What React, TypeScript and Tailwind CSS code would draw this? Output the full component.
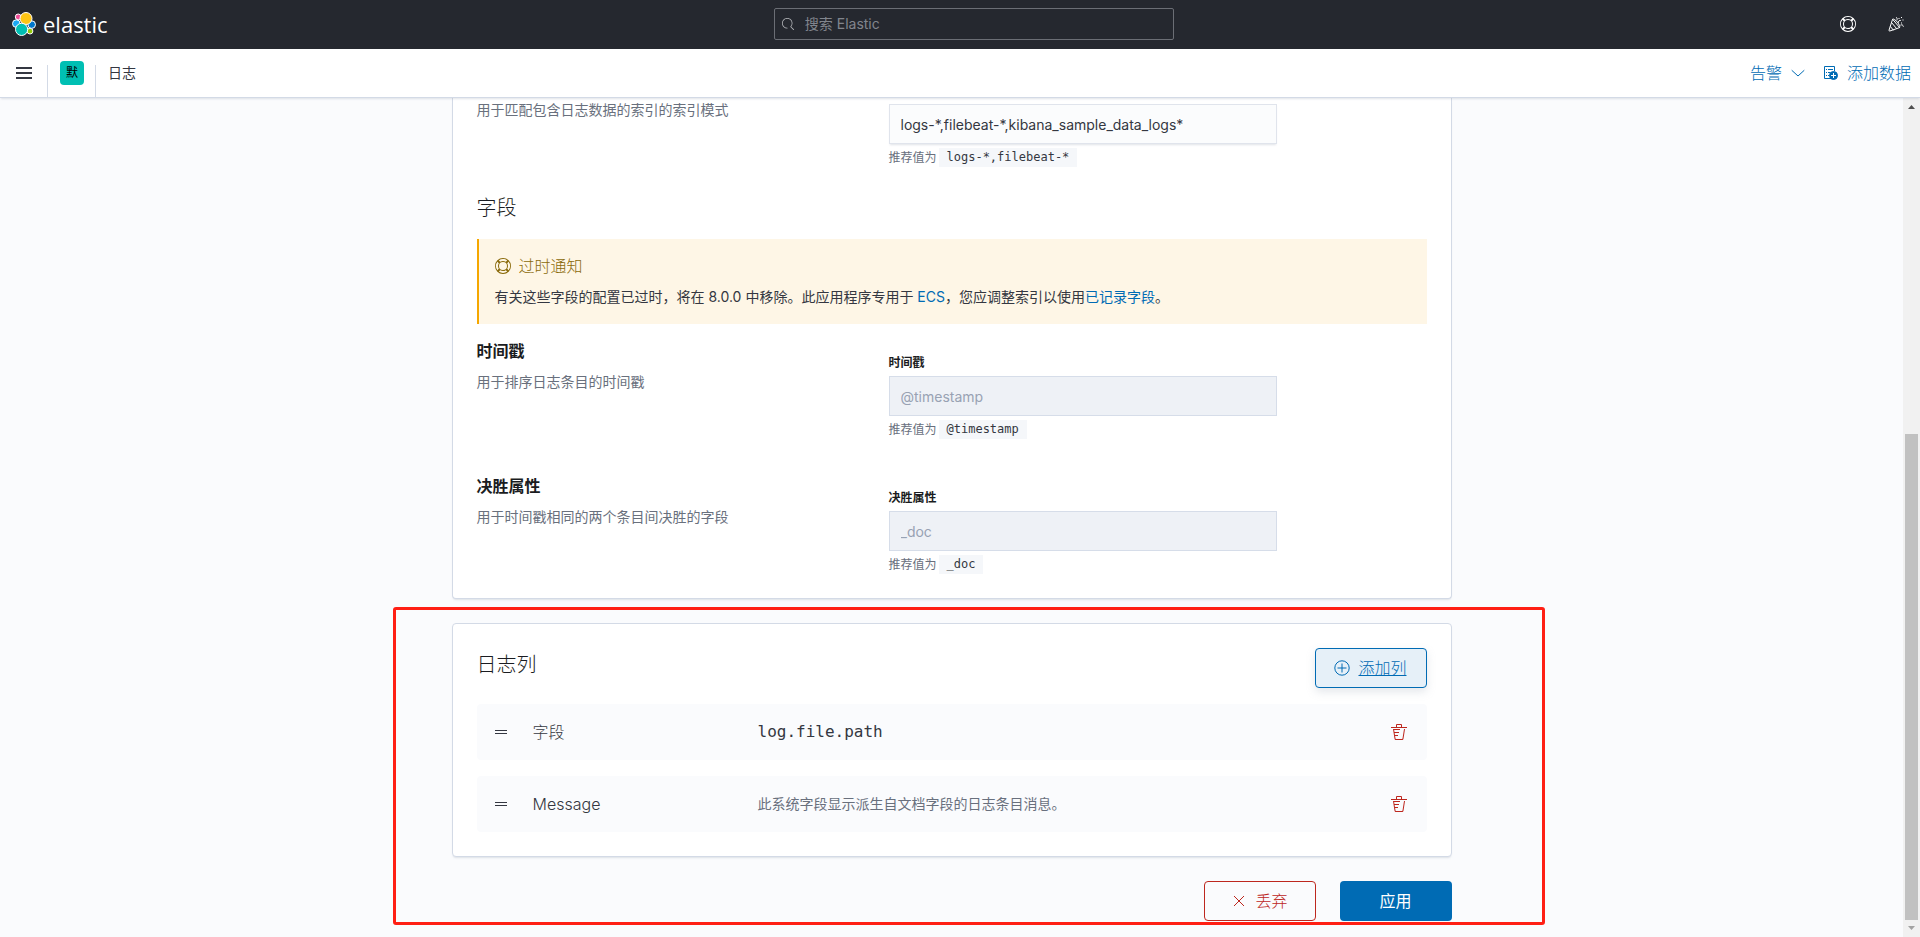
import React from "react";

const MONO = "font-['DejaVu_Sans_Mono','Noto_Sans_CJK_SC',monospace]";

const LogoElastic = () => (
  <svg viewBox="0 0 24 24" className="size-6 shrink-0" stroke="#fff" strokeWidth="1">
    <circle cx="6.2" cy="4.9" r="2.9" fill="#f04e98" />
    <circle cx="18" cy="19.1" r="2.9" fill="#93c90e" />
    <circle cx="4.3" cy="11.6" r="3.8" fill="#1ba9f5" />
    <circle cx="19.7" cy="12.6" r="3.8" fill="#0077cc" />
    <circle cx="14" cy="6.5" r="6" fill="#fec514" />
    <circle cx="9.6" cy="17.4" r="6.1" fill="#00bfb3" />
  </svg>
);

const HelpIcon = () => (
  <svg viewBox="0 0 16 16" className="size-4 shrink-0" fill="currentColor">
    <path d="M13.6 12.186l-1.357-1.358c-.025-.025-.058-.034-.084-.056.53-.794.84-1.746.84-2.773a4.977 4.977 0 00-.84-2.772c.026-.02.059-.03.084-.056L13.6 3.813a6.96 6.96 0 010 8.373zM8 15A6.956 6.956 0 013.814 13.6l1.358-1.358c.025-.025.034-.057.055-.084C6.02 12.688 6.974 13 8 13a4.978 4.978 0 002.773-.84c.02.026.03.058.056.083l1.357 1.358A6.956 6.956 0 018 15zm-5.601-2.813a6.963 6.963 0 010-8.373l1.359 1.358c.024.025.057.035.084.056A4.97 4.97 0 003 8c0 1.027.31 1.98.842 2.773-.027.022-.06.031-.084.056l-1.36 1.358zm5.6-.187A4 4 0 118 4a4 4 0 010 8zM8 1c1.573 0 3.019.525 4.187 1.4l-1.357 1.358c-.025.025-.035.057-.056.084A4.979 4.979 0 008 3a4.979 4.979 0 00-2.773.842c-.021-.027-.03-.059-.055-.084L3.814 2.4A6.957 6.957 0 018 1zm0-1a8.001 8.001 0 10.003 16.002A8.001 8.001 0 008 0z" />
  </svg>
);

const CheerIcon = () => (
  <svg viewBox="0 0 16 16" className="size-4 shrink-0" fill="none" stroke="currentColor">
    <path d="M4.6 3.2 1 14.2c-.1.6.2.9.8.8l9.8-3.4z" strokeLinejoin="round" />
    <path d="M4.6 3.2c1-.6 3 .8 4.8 3s2.8 4.6 2.2 5.4M3.6 6.6l5 6M2.3 10.4l3.2 3.9" />
    <path d="M8.2 1.2c1 .8 1.2 2 .6 3.2M10 7c.2-1.8 1.2-2.6 2.6-2.6M12.4 9.2c1.4-.8 2.8-.2 3 1.5" />
    <path d="M10.5 2.5h1M13 1.5h1M14.5 4h1M13 7h1M11.5 4.5h1" />
  </svg>
);

const SearchIcon = () => (
  <svg viewBox="0 0 16 16" className="size-3 shrink-0" fill="currentColor">
    <path d="M11.271 11.978l3.872 3.873a.502.502 0 00.708 0 .502.502 0 000-.708l-3.565-3.564c2.38-2.747 2.267-6.923-.342-9.532-2.73-2.73-7.17-2.73-9.898 0-2.728 2.729-2.728 7.17 0 9.9a6.955 6.955 0 004.949 2.05.5.5 0 000-1 5.96 5.96 0 01-4.242-1.757 6.01 6.01 0 010-8.486 6.004 6.004 0 018.484 0 6.01 6.01 0 010 8.486.5.5 0 00.034.738z" />
  </svg>
);

const AddDataIcon = () => (
  <svg viewBox="0 0 16 16" className="size-4 shrink-0" fill="none" stroke="currentColor">
    <path d="M8 13.5H1.5v-12h10V6" />
    <path d="M3 4.5h1M5 4.5h5M3 7.5h1M5 7.5h2M3 10.5h1M5 10.5h1" />
    <circle cx="10.5" cy="10.5" r="4" fill="currentColor" />
    <path d="M10.5 8v5M8 10.5h5" stroke="#fff" />
  </svg>
);

const TrashIcon = () => (
  <svg viewBox="0 0 16 16" className="size-4 shrink-0" fill="currentColor">
    <path d="M11 3h5v1H0V3h5V1a1 1 0 011-1h4a1 1 0 011 1v2zm-7.056 8H7v1H4.1l.392 2.519c.042.269.254.458.493.458h6.03c.239 0 .451-.189.493-.458l1.498-9.576H14l-1.504 9.73c-.116.747-.74 1.304-1.481 1.304h-6.03c-.741 0-1.365-.557-1.481-1.304l-1.511-9.73H9V5.95H3.157L3.476 8H8v1H3.632l.312 2zM6 3h4V1H6v2z" />
  </svg>
);

type FieldProps = {
  id: string;
  label?: string;
  name: string;
  value: string;
  recommended: string;
  disabled?: boolean;
};

const Field = ({ id, label, name, value, recommended, disabled }: FieldProps) => (
  <div className="w-[388px]">
    {label && (
      <label htmlFor={id} className="block mb-[5px] text-xs leading-4 font-bold text-[#1a1c21]">
        {label}
      </label>
    )}
    <input
      id={id}
      type="text"
      aria-label={name}
      defaultValue={value}
      disabled={disabled}
      className="block w-full h-10 px-[11px] text-sm font-normal text-[#343741] border border-[#e0e4ec] bg-[#fbfcfd] shadow-[0_2px_2px_-1px_rgba(152,162,179,0.3)] outline-none disabled:bg-[#eef1f6] disabled:border-[#d6dde9] disabled:text-[#98a2b3] disabled:shadow-none"
    />
    <p className="flex gap-[2px] mt-1 text-xs leading-[19px] font-normal text-[#69707d]">
      推荐值为
      <code className={`${MONO} px-2 bg-[#f5f7fa] text-[#343741]`}>{recommended}</code>
    </p>
  </div>
);

const fields = [
  { id: "timestamp", title: "时间戳", text: "用于排序日志条目的时间戳", value: "@timestamp" },
  { id: "tiebreaker", title: "决胜属性", text: "用于时间戳相同的两个条目间决胜的字段", value: "_doc" },
];

const columns = [
  { name: "字段", value: "log.file.path", system: false },
  { name: "Message", value: "此系统字段显示派生自文档字段的日志条目消息。", system: true },
];

const Header = () => (
  <header className="shrink-0">
    <div className="h-[49px] px-3 pb-px flex items-center justify-between bg-[#25282f] text-white">
      <a href="#" className="flex items-center gap-[7px]">
        <LogoElastic />
        <span className="text-[22px] leading-6 font-normal font-['Open_Sans','Noto_Sans',sans-serif]">elastic</span>
      </a>
      <div className="w-[400px] flex items-center h-8 px-[7px] gap-[11px] rounded-xs border border-[#6b6e75] text-[#b5b7bb]">
        <SearchIcon />
        <input
          type="search"
          aria-label="搜索 Elastic"
          placeholder="搜索 Elastic"
          className="flex-1 text-sm font-normal bg-transparent outline-none placeholder:text-[#81858d]"
        />
      </div>
      <div className="flex justify-end gap-8 pr-1">
        <button aria-label="帮助"><HelpIcon /></button>
        <button aria-label="新闻"><CheerIcon /></button>
      </div>
    </div>

    <div className="relative h-[49px] flex items-center bg-white border-b border-[#d3dae6] shadow-[0_2px_2px_-1px_rgba(152,162,179,0.3)]">
      <button aria-label="菜单" className="w-[47px] pl-4 flex flex-col gap-[3px]">
        <span className="w-4 h-[2px] bg-[#343741]" />
        <span className="w-4 h-[2px] bg-[#343741]" />
        <span className="w-4 h-[2px] bg-[#343741]" />
      </button>
      <div className="self-end h-8 border-l border-[#d3dae6]" />
      <button className="ml-3 mr-[11px] size-6 rounded-sm bg-[#00bfb3] text-xs font-normal text-black">默</button>
      <div className="self-end h-8 border-l border-[#d3dae6]" />
      <span className="ml-3 text-sm font-normal">日志</span>
      <div className="ml-auto pr-[9px] flex items-center text-[#006bb4]">
        <button className="flex items-center gap-2">
          告警
          <svg viewBox="0 0 16 16" className="size-4" fill="none" stroke="currentColor">
            <path d="M2 5.5l6 5.5 6-5.5" strokeLinecap="round" strokeLinejoin="round" />
          </svg>
        </button>
        <button className="ml-[17px] flex items-center gap-2">
          <AddDataIcon />
          添加数据
        </button>
      </div>
    </div>
  </header>
);

const ScrollBar = () => (
  <div className="w-[17px] shrink-0 flex flex-col items-center bg-[#f1f1f1]">
    <svg viewBox="0 0 17 17" className="size-[17px]"><path d="M5 11h7L8.5 7z" fill="#505050" /></svg>
    <div className="basis-[319px]" />
    <div className="flex-1 w-[13px] bg-[#c1c1c1]" />
    <svg viewBox="0 0 17 17" className="size-[17px]"><path d="M5 6h7L8.5 10z" fill="#a3a3a3" /></svg>
  </div>
);

const App = () => {
  return (
    <div className="h-screen flex flex-col overflow-hidden bg-[#fafbfd] text-[#343741] font-light font-['Inter','Noto_Sans_CJK_SC',sans-serif]">
      <Header />
      <div className="flex-1 min-h-0 flex">
        <main className="flex-1 overflow-hidden">
          <div className="w-full max-w-[1000px] mx-auto">
            <section className="px-6 pb-6 bg-white border border-t-0 border-[#d3dae6] rounded-b-sm shadow-[0_2px_2px_-1px_rgba(152,162,179,0.3)]">
              <div className="grid grid-cols-[412px_1fr]">
                <p className="text-sm leading-6 font-normal text-[#69707d]">用于匹配包含日志数据的索引的索引模式</p>
                <div className="pt-[6px]">
                  <Field
                    id="indices"
                    name="日志索引"
                    value="logs-*,filebeat-*,kibana_sample_data_logs*"
                    recommended="logs-*,filebeat-*"
                  />
                </div>
              </div>

              <h3 className="mt-[29px] mb-[19px] text-xl leading-6 text-[#1a1c21]">字段</h3>

              <div className="p-4 border-l-2 border-[#f5a700] bg-[#fef6e6]">
                <div className="flex items-center gap-2 leading-[22px] text-[#8a6a0a]">
                  <HelpIcon />
                  过时通知
                </div>
                <p className="mt-2 text-sm leading-[23px] font-normal">
                  有关这些字段的配置已过时，将在 8.0.0 中移除。此应用程序专用于{" "}
                  <a href="#" className="text-[#006bb4]">ECS</a>，您应调整索引以使用
                  <a href="#" className="text-[#006bb4]">已记录字段</a>。
                </p>
              </div>

              <div className="mt-4 flex flex-col gap-9">
                {fields.map((f) => (
                  <div key={f.id} className="grid grid-cols-[412px_1fr]">
                    <div>
                      <h4 className="text-base leading-[22px] font-bold text-[#1a1c21]">{f.title}</h4>
                      <p className="mt-2 text-sm leading-6 font-normal text-[#69707d]">{f.text}</p>
                    </div>
                    <div className="pt-[15px]">
                      <Field id={f.id} label={f.title} name={f.title} value={f.value} recommended={f.value} disabled />
                    </div>
                  </div>
                ))}
              </div>
            </section>

            <div className="relative mt-6">
              <section className="p-6 bg-white border border-[#d3dae6] rounded-sm shadow-[0_2px_2px_-1px_rgba(152,162,179,0.3)]">
                <div className="flex items-start justify-between">
                  <h3 className="text-xl leading-[34px] text-[#1a1c21]">日志列</h3>
                  <button className="w-28 h-10 flex items-center justify-center gap-2 rounded-sm border border-[#006bb4] bg-[#e6f0f8] text-[#006bb4] underline shadow-[0_4px_8px_rgba(152,162,179,0.25)]">
                    <svg viewBox="0 0 16 16" className="size-4" fill="none" stroke="currentColor">
                      <circle cx="8" cy="8" r="7.2" />
                      <path d="M8 3.5v9M3.5 8h9" />
                    </svg>
                    添加列
                  </button>
                </div>
                <ul className="mt-4 flex flex-col gap-4">
                  {columns.map((c) => (
                    <li key={c.name} className="h-14 px-4 flex items-center rounded-sm bg-[#fafbfd]">
                      <svg viewBox="0 0 16 16" className="size-4" fill="currentColor">
                        <path d="M2 6h12v1H2zM2 9h12v1H2z" />
                      </svg>
                      <span className="w-[225px] ml-6">{c.name}</span>
                      {c.system ? (
                        <span className="text-sm font-normal text-[#69707d]">{c.value}</span>
                      ) : (
                        <code className={`${MONO} text-base`}>{c.value}</code>
                      )}
                      <button aria-label="移除列" className="ml-auto mr-1 text-[#bd271e]"><TrashIcon /></button>
                    </li>
                  ))}
                </ul>
              </section>

              <div className="mt-6 flex justify-end gap-6">
                <button className="w-28 h-10 flex items-center justify-center gap-2 rounded-sm border border-[#bd271e] text-[#bd271e]">
                  <svg viewBox="0 0 16 16" className="size-4" fill="none" stroke="currentColor">
                    <path d="M3 3l10 10M13 3L3 13" />
                  </svg>
                  丢弃
                </button>
                <button className="w-28 h-10 rounded-sm bg-[#006bb4] font-normal text-white">应用</button>
              </div>

              {/* highlight frame */}
              <div className="absolute -top-4 -bottom-1 -left-[59px] -right-[93px] border-3 border-[#ff1f14] rounded-[3px] pointer-events-none" />
            </div>
          </div>
        </main>
        <ScrollBar />
      </div>
    </div>
  );
};

export default App;
